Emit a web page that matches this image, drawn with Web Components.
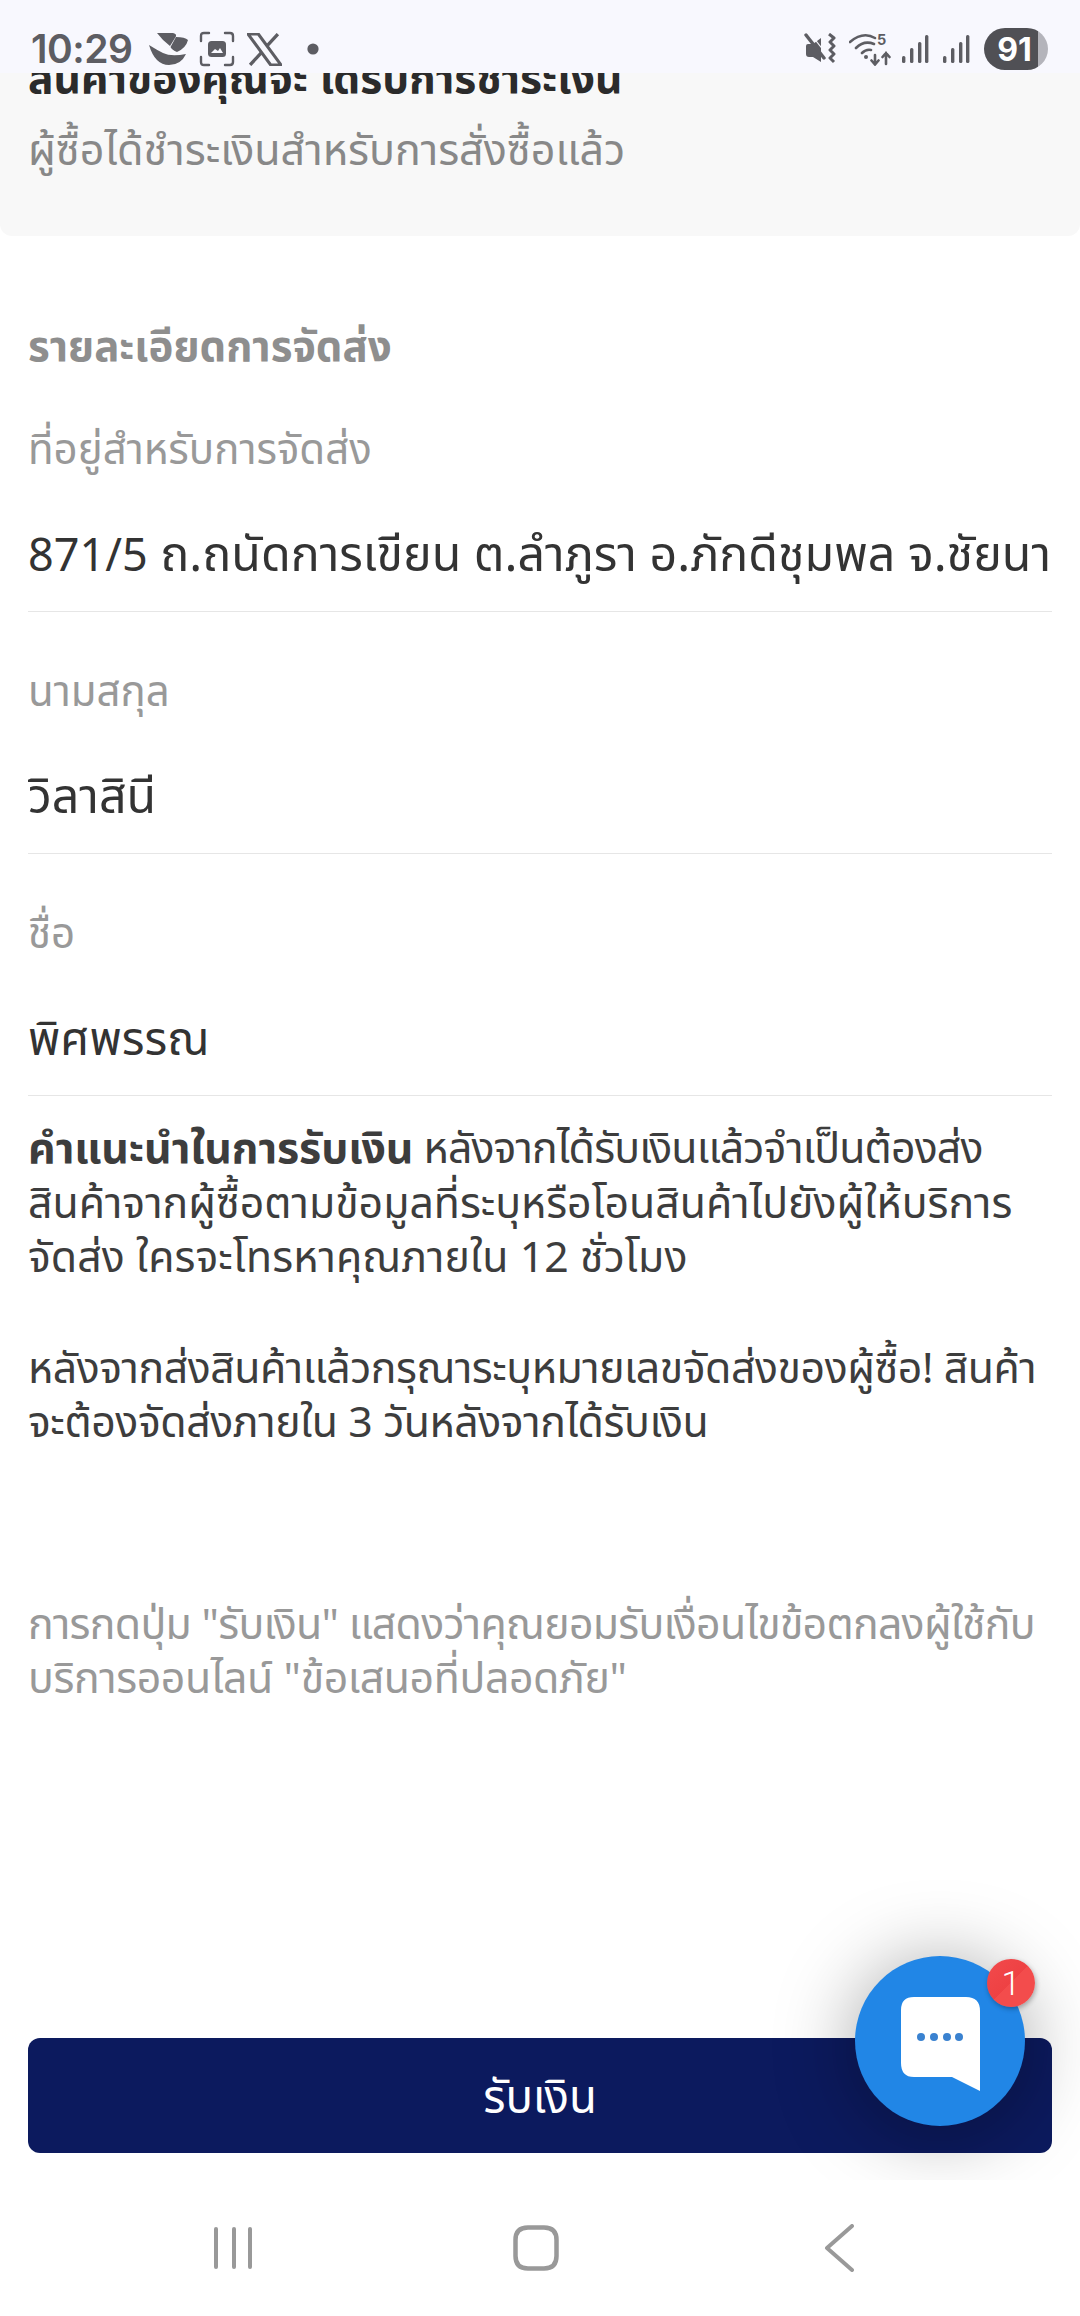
<!DOCTYPE html>
<html lang="th"><head><meta charset="utf-8"><title>รับเงิน</title>
<style>
html,body{margin:0;padding:0;background:#fff}
body{font-family:"Noto Sans","Noto Sans Thai","Open Sans","Liberation Sans",sans-serif;width:1080px;height:2316px;overflow:hidden}
</style></head><body>
<app-screen>
  <status-bar slot="status"></status-bar>
  <notice-card title-text="สินค้าของคุณจะ ได้รับการชำระเงิน" sub="ผู้ซื้อได้ชำระเงินสำหรับการสั่งซื้อแล้ว"></notice-card>
  <section-title>รายละเอียดการจัดส่ง</section-title>
  <info-field label="ที่อยู่สำหรับการจัดส่ง"><span style="font-size:45px">871/5</span> ถ.ถนัดการเขียน ต.ลำภูรา อ.ภักดีชุมพล จ.ชัยนาท 17120</info-field>
  <info-field label="นามสกุล">วิลาสินี</info-field>
  <info-field label="ชื่อ"><span style="font-size:46.500px">พิศพรรณ</span></info-field>
  <text-block>
    <text-line spacing="-.85px"><b style="letter-spacing:-.1px">คำแนะนำในการรับเงิน</b> หลังจากได้รับเงินแล้วจำเป็นต้องส่ง</text-line>
    <text-line>สินค้าจากผู้ซื้อตามข้อมูลที่ระบุหรือโอนสินค้าไปยังผู้ให้บริการ</text-line>
    <text-line spacing=".08px">จัดส่ง ใครจะโทรหาคุณภายใน 12 ชั่วโมง</text-line>
    <text-line style="margin-top:56px" spacing="-.45px">หลังจากส่งสินค้าแล้วกรุณาระบุหมายเลขจัดส่งของผู้ซื้อ! สินค้า</text-line>
    <text-line spacing="-.42px">จะต้องจัดส่งภายใน 3 วันหลังจากได้รับเงิน</text-line>
    <text-line style="margin-top:147px;color:#999" spacing="-.72px">การกดปุ่ม "รับเงิน" แสดงว่าคุณยอมรับเงื่อนไขข้อตกลงผู้ใช้กับ</text-line>
    <text-line style="color:#999" spacing="-.4px">บริการออนไลน์ "ข้อเสนอที่ปลอดภัย"</text-line>
  </text-block>
  <action-bar slot="bar">รับเงิน</action-bar>
  <chat-fab slot="fab" count="1"></chat-fab>
  <nav-bar slot="nav"></nav-bar>
</app-screen>
<script>
function def(name, html, attrs){
  customElements.define(name, class extends HTMLElement{
    connectedCallback(){
      if(this.shadowRoot) return;
      const r=this.attachShadow({mode:'open'});
      let h=html;
      for(const a of (attrs||[])) h=h.split('{{'+a+'}}').join(this.getAttribute(a)||'');
      r.innerHTML=h;
    }
  });
}
def('app-screen',`<style>
:host{display:flex;flex-direction:column;width:1080px;height:2316px;position:relative;overflow:hidden;background:#fff}
.content{flex:1;min-height:0;overflow:hidden;display:flex;flex-direction:column}
.status{position:absolute;left:0;top:0;right:0;z-index:3}
</style>
<div class="status"><slot name="status"></slot></div>
<div class="content"><slot></slot><slot name="bar"></slot></div>
<slot name="fab"></slot>
<slot name="nav"></slot>`);

def('status-bar',`<style>
:host{display:flex;height:73px;background:#f8f8fe;align-items:flex-start;color:#5d5d63;font-family:Inter,"Noto Sans",sans-serif}
.l{display:flex;align-items:center;height:34px;margin:32px 0 0 31px}
.t{font-size:39px;font-weight:600;letter-spacing:-.5px;line-height:34px;width:118px}
.r{display:flex;align-items:center;margin:28px 0 0 auto;padding-right:32px;height:42px}
.b{margin-left:14px;width:64px;height:42px;border-radius:21px;background:linear-gradient(90deg,#505055 0 54px,#b4b4bb 54px);color:#fff;font-size:32px;font-weight:700;display:flex;align-items:center;justify-content:center;padding-right:3px;box-sizing:border-box}
svg{display:block}
</style>
<div class="l"><span class="t">10:29</span>
<svg width="40" height="32" viewBox="0 0 40 32"><path d="M8 0 L24 0 Q29 1 26 5 L21 13 Q14 8 8 0Z M27 4 Q36 4 39 7 Q37 15 28 19 Q23 17 21.500 14Z M0 12 Q8 17 14 20 Q22 24 37 21 Q32 32 20 32 Q6 32 0 12Z" fill="#5d5d63"/></svg>
<svg width="36" height="36" viewBox="0 0 36 36" fill="none" stroke="#5d5d63" stroke-width="2.400" stroke-linecap="round" style="margin-left:10px"><path d="M2 10V5Q2 2 5 2H10M26 2H31Q34 2 34 5V10M34 26V31Q34 34 31 34H26M10 34H5Q2 34 2 31V26"/><rect x="9" y="10" width="18" height="16" rx="3.500" fill="#5d5d63" stroke="none"/><path d="M12 22l4-4 3 2 2-3 3 5z" fill="#f8f8fe" stroke="none"/></svg>
<svg width="35" height="33" viewBox="0 0 34 32" style="margin-left:12px"><path d="M1 1H11L33 31H23Z" fill="none" stroke="#5d5d63" stroke-width="3"/><path d="M30 1L19 13M14 19L3 31" stroke="#5d5d63" stroke-width="3.200" fill="none"/></svg>
<svg width="12" height="12" viewBox="0 0 12 12" style="margin-left:25px"><circle cx="6" cy="6" r="5.600" fill="#5d5d63"/></svg>
</div>
<div class="r">
<svg width="32" height="32" viewBox="0 0 32 32"><path d="M2 13Q2 11 4 11H9L17 5V29L9 24H5Q2 24 2 21Z" fill="#5d5d63"/><path d="M2 2L20 25" stroke="#5d5d63" stroke-width="3.400" stroke-linecap="round"/><path d="M2 0L21 24" stroke="#f8f8fe" stroke-width="1.200" transform="translate(3 -1)"/><path d="M25 1l5 4-4 4 4 4-4 4 4 4-4 4 4 4" fill="none" stroke="#5d5d63" stroke-width="3" stroke-linejoin="round"/></svg>
<svg width="44" height="34" viewBox="0 0 44 34" fill="none" stroke="#5d5d63" stroke-width="2.600" stroke-linecap="round" style="margin-left:13px"><path d="M1 10Q14 -1 26 6M7 16Q15 8 25 12M13 21Q17 17 22 18"/><circle cx="17" cy="25" r="2" fill="#5d5d63" stroke="none"/><path d="M26 23V32M22.500 28.500L26 32.500L29.500 28.500M37 32V21M33.500 25L37 21L40.500 25"/><text x="28" y="13" font-size="14.500" font-weight="700" fill="#5d5d63" stroke="none" font-family="Inter,sans-serif">5</text></svg>
<svg width="28" height="30" viewBox="0 0 28 30" fill="#5d5d63" style="margin-left:8px"><rect x="1" y="22" width="3.400" height="7" rx="1.500"/><rect x="9" y="14" width="3.400" height="15" rx="1.500"/><rect x="17" y="8" width="3.400" height="21" rx="1.500"/><rect x="24" y="1" width="3.400" height="28" rx="1.500"/></svg>
<svg width="28" height="30" viewBox="0 0 28 30" fill="#5d5d63" style="margin-left:13px"><rect x="1" y="22" width="3.400" height="7" rx="1.500"/><rect x="9" y="14" width="3.400" height="15" rx="1.500"/><rect x="17" y="8" width="3.400" height="21" rx="1.500"/><rect x="24" y="1" width="3.400" height="28" rx="1.500"/></svg>
<div class="b">91</div>
</div>`);

def('notice-card',`<style>
:host{display:block;background:#f8f8f8;height:236px;box-sizing:border-box;border-radius:0 0 12px 12px;padding:48px 28px 0;flex:none}
.a{font-size:42.500px;font-weight:700;color:#2b2b2b;line-height:58px;white-space:nowrap}
.b{font-size:43px;color:#888;line-height:58px;margin-top:14px;white-space:nowrap}
</style><div class="a">{{title-text}}</div><div class="b">{{sub}}</div>`,['title-text','sub']);

def('section-title',`<style>
:host{display:block;flex:none;margin-top:83px;padding:0 28px;font-size:42px;font-weight:700;color:#8e8e8e;line-height:51px}
</style><slot></slot>`);

def('info-field',`<style>
:host{display:block;flex:none;margin:0 28px;border-bottom:1.500px solid #e6e6e6;height:242px;box-sizing:border-box;overflow:hidden}
.l{font-size:42px;color:#999;line-height:56px;margin-top:50px;white-space:nowrap}
.v{font-size:48.300px;color:#333;line-height:62px;margin-top:45px;white-space:nowrap;overflow:hidden}
</style><div class="l">{{label}}</div><div class="v"><slot></slot></div>`,['label']);

def('text-block',`<style>
:host{display:flex;flex-direction:column;flex:none;padding:24px 28px 0;font-size:42.800px;line-height:54.500px;color:#3d3d3d}
</style><slot></slot>`);

customElements.define('text-line', class extends HTMLElement{
  connectedCallback(){
    if(this.shadowRoot) return;
    const r=this.attachShadow({mode:'open'});
    r.innerHTML=`<style>:host{display:block;white-space:nowrap;letter-spacing:${this.getAttribute('spacing')||'0'}}</style><slot></slot>`;
  }
});

def('action-bar',`<style>
:host{display:flex;flex:none;margin:auto 28px 27px;height:115px;border-radius:12px;background:#0c1a5e;color:#fff;font-size:45.500px;align-items:center;justify-content:center;padding-top:5px;box-sizing:border-box}
</style><slot></slot>`);

def('chat-fab',`<style>
:host{display:block;position:absolute;left:855px;top:1956px;width:170px;height:170px}
.c{width:170px;height:170px;border-radius:50%;background:#2186e6;display:flex;align-items:center;justify-content:center;box-shadow:0 6px 80px rgba(0,0,0,.36)}
.n{position:absolute;left:132px;top:3px;width:48px;height:48px;border-radius:50%;background:linear-gradient(135deg,#f24a4c 0,#ee4143 50%,#f34c4c 50%);color:#fff;font:300 34px/48px Roboto,sans-serif;text-align:center;box-shadow:1px 2px 5px rgba(0,0,0,.3)}
</style><div class="c"><svg width="82" height="96" viewBox="0 0 82 96" style="margin:6px 0 0 1px;filter:blur(.6px)"><path d="M14 1H66Q80 1 80 15V95L52 81H14Q1 81 1 67V14Q1 1 14 1Z" fill="#fff"/><g fill="#3a82d0"><circle cx="21" cy="41" r="4"/><circle cx="34" cy="41" r="4"/><circle cx="47" cy="41" r="4"/><circle cx="59" cy="41" r="4"/></g></svg></div><div class="n">{{count}}</div>`,['count']);

def('nav-bar',`<style>
:host{display:flex;flex:none;height:136px;background:#fff;position:relative;z-index:1}
svg{display:block}
.w{display:flex;justify-content:center;align-items:center}
</style>
<div class="w" style="width:468px"><svg width="44" height="44" viewBox="0 0 44 44" fill="#999"><rect x="2" y="1" width="4" height="42" rx="2"/><rect x="20" y="1" width="4" height="42" rx="2"/><rect x="36" y="1" width="4" height="42" rx="2"/></svg></div>
<div class="w" style="width:136px"><svg width="46" height="46" viewBox="0 0 46 46" fill="none" stroke="#999" stroke-width="4.500"><path d="M15 2.500H31Q43.500 2.500 43.500 15V31Q43.500 43.500 31 43.500H15Q2.500 43.500 2.500 31V15Q2.500 2.500 15 2.500Z"/></svg></div>
<div class="w" style="flex:1;padding-right:6px"><svg width="30" height="48" viewBox="0 0 30 48" fill="none" stroke="#999" stroke-width="4" stroke-linecap="round" stroke-linejoin="round"><path d="M28 2L3 24L28 46" /></svg></div>`);
</script>
</body></html>
